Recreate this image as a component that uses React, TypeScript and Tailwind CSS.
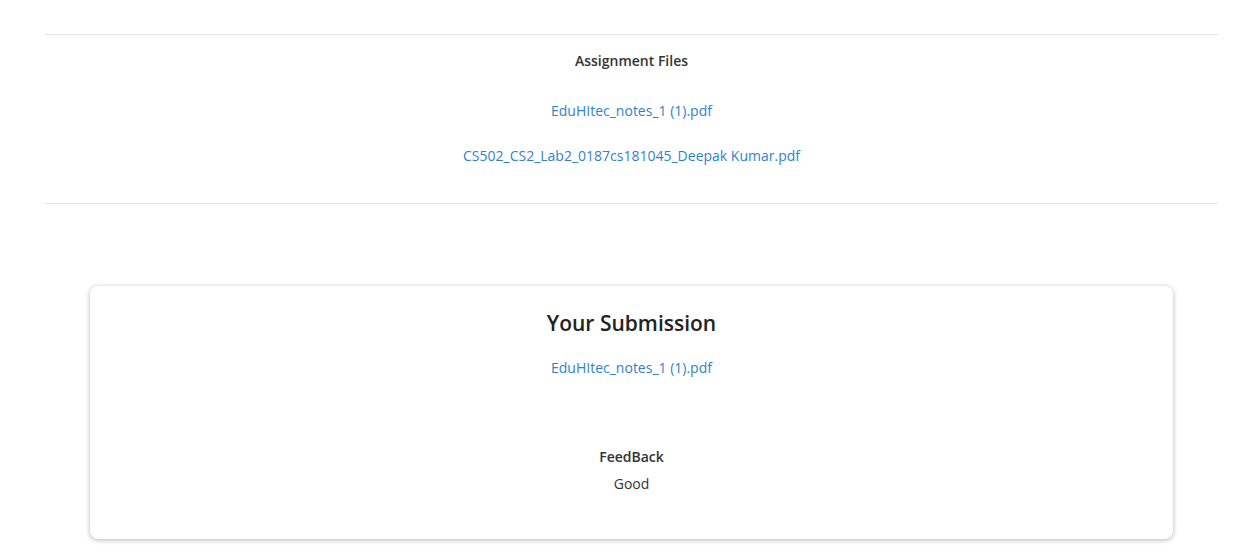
export default function App() {
  return (
    <div className="min-h-[559px] bg-white" style={{ fontFamily: '"Segoe UI", "Open Sans", "Noto Sans", sans-serif' }}>
      <div className="ml-[45px] w-[1173px] pt-[34px]">
        <div className="border-t border-[#e5e5e5]" />
        <div className="flex flex-col items-center pt-[16px] pb-[37px] text-[14px]">
          <div className="font-semibold text-[#333] leading-[20px]">Assignment Files</div>
          <a className="mt-[30px] leading-[20px] text-[#2f7fd6]">EduHItec_notes_1 (1).pdf</a>
          <a className="mt-[25px] leading-[20px] text-[#2f7fd6]">CS502_CS2_Lab2_0187cs181045_Deepak Kumar.pdf</a>
        </div>
        <div className="border-t border-[#e5e5e5]" />
        <div className="mx-[45px] mt-[82px] h-[253px] rounded-[8px] bg-white shadow-[0_1px_5px_rgba(0,0,0,0.3)] flex flex-col items-center pt-[23px]">
          <div className="text-[21px] font-semibold text-[#222] leading-[28px]">Your Submission</div>
          <a className="mt-[21px] text-[14px] leading-[20px] text-[#2f7fd6]">EduHItec_notes_1 (1).pdf</a>
          <div className="mt-[69px] text-[14px] font-semibold text-[#333] leading-[20px]">FeedBack</div>
          <div className="mt-[7px] text-[14px] text-[#333] leading-[20px]">Good</div>
        </div>
      </div>
    </div>
  );
}
